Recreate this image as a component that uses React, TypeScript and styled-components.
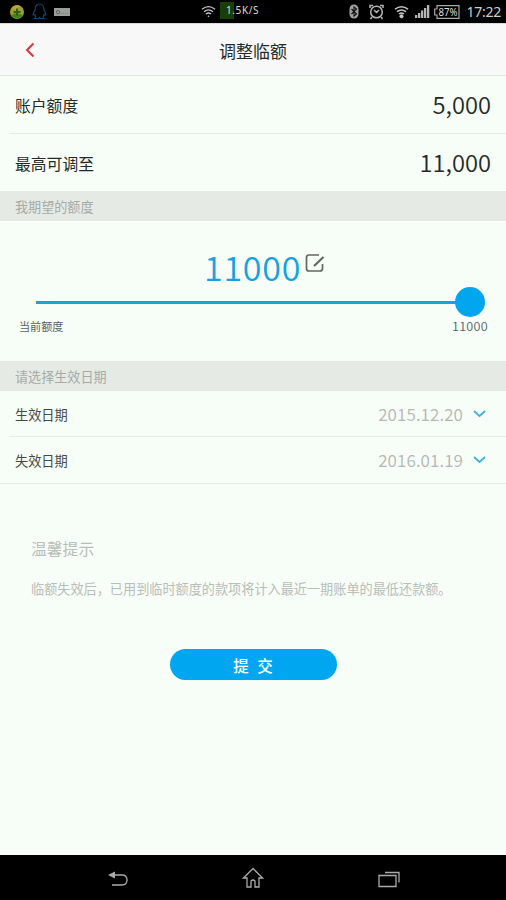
import React from "react";
import styled, { createGlobalStyle } from "styled-components";

const GlobalStyle = createGlobalStyle`
  * { box-sizing: border-box; }
  body { margin: 0; background: #f7fdf7; }
`;

const Screen = styled.div`
  width: 506px;
  height: 900px;
  display: flex;
  flex-direction: column;
  overflow: hidden;
  background: #f7fdf7;
  color: #252a27;
  font-family: "Noto Sans CJK SC", "Noto Sans", sans-serif;
  white-space: nowrap;
`;

const StatusBar = styled.div`
  height: 23px;
  flex: none;
  background: #000;
  color: #c4c4c4;
  display: grid;
  grid-template-columns: 200px 1fr auto;
  align-items: center;
  padding-right: 5px;
`;

const StatusGroup = styled.div<{ $gap: number; $left?: number }>`
  display: flex;
  align-items: center;
  height: 23px;
  gap: ${(p) => p.$gap}px;
  padding-left: ${(p) => p.$left ?? 0}px;
`;

const Speed = styled.span`
  height: 17px;
  width: 42px;
  margin: 0 0 3px -1px;
  padding-left: 6px;
  background: linear-gradient(90deg, #174008 14px, transparent 14px);
  font: 10px/17px "Noto Sans", sans-serif;
  letter-spacing: 0.6px;
  color: #dedede;
`;

const SignalGroup = styled(StatusGroup)`
  svg:nth-child(2) { margin-left: 4px; }
  svg:nth-child(3) { margin-left: 4px; }
  svg:nth-child(4) { margin-right: -2px; }
`;

const Clock = styled.span`
  font: 14px/22px "Noto Sans", sans-serif;
  letter-spacing: -0.25px;
  color: #cfcfcf;
`;

const Header = styled.header`
  height: 53px;
  flex: none;
  display: grid;
  grid-template-columns: 60px 1fr 60px;
  align-items: center;
  background: #f8f8f8;
  border-top: 1px solid #d9d9d9;
  border-bottom: 1px solid #e1e8e1;
`;

const Title = styled.h1`
  margin: 0;
  padding-top: 3px;
  text-align: center;
  font-size: 17px;
  line-height: 24px;
  font-weight: 400;
`;

const BackButton = styled.button`
  border: 0;
  padding: 0 0 0 25px;
  background: none;
  display: flex;
`;

const Row = styled.div<{ $height: number; $inset?: boolean; $line?: boolean }>`
  height: ${(p) => p.$height}px;
  flex: none;
  display: flex;
  align-items: center;
  justify-content: space-between;
  margin-left: ${(p) => (p.$inset ? 9 : 0)}px;
  padding: 2px 15px 0 ${(p) => (p.$inset ? 6 : 15)}px;
  border-bottom: ${(p) => (p.$line ? 1 : 0)}px solid #e6ebe6;
`;

const RowLabel = styled.span<{ $small?: boolean }>`
  font-size: ${(p) => (p.$small ? 13.2 : 15.8)}px;
  line-height: 24px;
  color: ${(p) => (p.$small ? "#454a47" : "#252a27")};
`;

const Amount = styled.span`
  font-size: 23.7px;
  line-height: 30px;
  padding-bottom: 4px;
  font-weight: 350;
`;

const DateValue = styled.span`
  display: flex;
  align-items: center;
  gap: 10px;
  padding-right: 5px;
  font-size: 17px;
  line-height: 24px;
  padding-bottom: 2px;
  font-weight: 350;
  letter-spacing: 0.1px;
  color: #b3b8b4;
`;

const SectionTitle = styled.div`
  height: 30px;
  flex: none;
  padding: 1px 15px 0;
  background: #e5eae5;
  color: #a5aaa6;
  font-size: 13.1px;
  line-height: 29px;
`;

const LimitPanel = styled.section`
  height: 140px;
  flex: none;
  padding-top: 24px;
`;

const LimitValue = styled.div`
  height: 42px;
  display: flex;
  padding-left: 204px;
  gap: 4px;
  color: #15a2e2;
  font-size: 34px;
  line-height: 43px;
  font-weight: 350;
  letter-spacing: 0.75px;
  svg { margin-top: 8px; }
`;

const Slider = styled.div`
  height: 30px;
  display: flex;
  align-items: center;
  padding-left: 36px;
`;

const Track = styled.div`
  width: 420px;
  height: 3px;
  background: #18a3dc;
`;

const Thumb = styled.div`
  width: 30px;
  height: 30px;
  margin-left: -1px;
  border-radius: 50%;
  background: #02a6ef;
`;

const SliderLabels = styled.div`
  display: flex;
  justify-content: space-between;
  padding: 0 18px 0 19px;
  font-size: 11.1px;
  line-height: 18px;
  color: #566168;
`;

const MaxLabel = styled.span`
  font-size: 12.6px;
  line-height: 17px;
  font-weight: 350;
  letter-spacing: 0.3px;
`;

const Notice = styled.section`
  height: 165px;
  flex: none;
  padding: 53px 31px 0;
  color: #b8beb9;
`;

const NoticeTitle = styled.h2`
  margin: 0 0 16px;
  font-size: 15.8px;
  line-height: 24px;
  font-weight: 400;
`;

const NoticeText = styled.p`
  margin: 0;
  font-size: 13.15px;
  line-height: 24px;
`;

const SubmitButton = styled.button`
  width: 167px;
  height: 31px;
  flex: none;
  align-self: center;
  border: 0;
  border-radius: 16px;
  padding: 0;
  background: #00a7f0;
  color: #fff;
  font: 500 15.5px/28px "Noto Sans CJK SC", sans-serif;
  word-spacing: 5px;
`;

const NavBar = styled.nav`
  height: 45px;
  flex: none;
  margin-top: auto;
  display: grid;
  grid-template-columns: 1fr 36px 1fr;
  align-items: center;
  padding: 0 106px;
  background: #000;
  svg:nth-child(1) { margin-top: 3px; }
  svg:nth-child(2) { justify-self: center; }
  svg:nth-child(3) { justify-self: end; margin-top: 3px; }
`;

const Chevron = () => (
  <svg width="13" height="8" viewBox="0 0 13 8" fill="none" stroke="#3db1df" strokeWidth="1.7">
    <path d="M1 1l5.500 5L12 1" />
  </svg>
);

const RewardIcon = () => (
  <svg width="16" height="16" viewBox="0 0 16 16">
    <circle cx="8" cy="8" r="7" fill="#98a02a" />
    <path d="M2 11a7 7 0 0 0 12 0l-6-2z" fill="#438125" />
    <path d="M3 4a7 7 0 0 1 8-2L7 6z" fill="#c7a535" />
    <path d="M8 4.500v7M4.500 8h7" stroke="#365d17" strokeWidth="2" />
  </svg>
);

const PenguinIcon = () => (
  <svg width="15" height="17" viewBox="0 0 15 17" fill="none" stroke="#104675" strokeWidth="1.2">
    <path d="M3 7C3 3 5 1 7.500 1S12 3 12 7c1 2 2 3 1.800 5l-1.600-.5-1 2.500 1 1.500H8.500l-1-1-1 1H2.800l1-1.500-1-2.500-1.600.5C1 10 2 9 3 7z" />
  </svg>
);

const KeyboardIcon = () => (
  <svg width="16" height="8" viewBox="0 0 16 8">
    <path fill="#9b9e9b" d="M0 0h16v8H0z" />
    <circle cx="4" cy="4.200" r="1.700" fill="none" stroke="#5e625e" />
    <path d="M7 5.500h7" stroke="#7d817d" strokeDasharray="1 1" />
  </svg>
);

const WifiIcon = ({ strong }: { strong?: boolean }) => (
  <svg width="15" height="15" viewBox="0 0 15 15" fill="none" stroke="#c4c4c4" strokeWidth={strong ? 1.6 : 1.3}>
    <path d="M1 5.200q6.500-5 13 0M3 7.700q4.500-3.500 9 0M5 10q2.500-2 5 0" />
    <circle cx="7.500" cy="12.200" r={strong ? 2 : 0.8} fill="#c4c4c4" stroke="none" />
  </svg>
);

const BluetoothIcon = () => (
  <svg width="10" height="15" viewBox="0 0 10 15">
    <rect x=".5" y=".5" width="9" height="14" rx="4.500" fill="#a2a2a2" />
    <path d="M2.500 5l5 5L5 12V3l2.500 2-5 5" fill="none" stroke="#111" strokeWidth="1.100" />
  </svg>
);

const AlarmIcon = () => (
  <svg width="15" height="16" viewBox="0 0 15 16" fill="none" stroke="#b4b4b4" strokeWidth="1.500">
    <circle cx="7.500" cy="8" r="5.800" />
    <path d="M1 4V1.500h3M11 1.500h3V4M3 13l-1.500 2M12 13l1.500 2M5 6l2.500 2.500L10 6" />
  </svg>
);

const SignalIcon = () => (
  <svg width="15" height="13" viewBox="0 0 15 13" fill="#b6b6b6">
    <path d="M0 10h2.300v3H0zM3 8h2.300v5H3zM6 5.500h2.300V13H6zM9 3h2.300v10H9zM12 0h2.300v13H12z" />
  </svg>
);

const BatteryIcon = () => (
  <svg width="26" height="14" viewBox="0 0 26 14">
    <path d="M3 .7h22v12.600H3V10H.7V4H3z" fill="none" stroke="#a8a8a8" strokeWidth="1.200" />
    <text x="4.500" y="10.500" fill="#dedede" fontFamily="Noto Sans" fontSize="10" textLength="19" lengthAdjust="spacingAndGlyphs">87%</text>
  </svg>
);

const rates = [
  { label: "账户额度", value: "5,000", height: 58, inset: true },
  { label: "最高可调至", value: "11,000", height: 57, inset: false },
];

const dates = [
  { label: "生效日期", value: "2015.12.20", height: 46, inset: true },
  { label: "失效日期", value: "2016.01.19", height: 47, inset: false },
];

export default function App() {
  return (
    <Screen>
      <GlobalStyle />
      <StatusBar>
        <StatusGroup $gap={7} $left={9}>
          <RewardIcon />
          <PenguinIcon />
          <KeyboardIcon />
        </StatusGroup>
        <StatusGroup $gap={5} $left={1}>
          <WifiIcon />
          <Speed>1.5K/S</Speed>
        </StatusGroup>
        <SignalGroup $gap={6}>
          <BluetoothIcon />
          <AlarmIcon />
          <WifiIcon strong />
          <SignalIcon />
          <BatteryIcon />
          <Clock>17:22</Clock>
        </SignalGroup>
      </StatusBar>
      <Header>
        <BackButton aria-label="返回">
          <svg width="10" height="16" viewBox="0 0 10 16" fill="none" stroke="#d83a3a" strokeWidth="2">
            <path d="M8.500 1.500L2 8l6.500 6.500" />
          </svg>
        </BackButton>
        <Title>调整临额</Title>
      </Header>
      {rates.map((r) => (
        <Row key={r.label} $height={r.height} $inset={r.inset} $line={r.inset}>
          <RowLabel>{r.label}</RowLabel>
          <Amount>{r.value}</Amount>
        </Row>
      ))}
      <SectionTitle>我期望的额度</SectionTitle>
      <LimitPanel>
        <LimitValue>
          11000
          <svg width="20" height="20" viewBox="0 0 20 20" fill="none" stroke="#626762" strokeWidth="1.700">
            <path d="M14 2H4Q1.500 2 1.500 4.500v11Q1.500 18 4 18h11q2.500 0 2.500-2.500V11" />
            <path d="M9 13L18.500 4" strokeWidth="2.200" />
          </svg>
        </LimitValue>
        <Slider>
          <Track />
          <Thumb />
        </Slider>
        <SliderLabels>
          <span>当前额度</span>
          <MaxLabel>11000</MaxLabel>
        </SliderLabels>
      </LimitPanel>
      <SectionTitle>请选择生效日期</SectionTitle>
      {dates.map((d) => (
        <Row key={d.label} $height={d.height} $inset={d.inset} $line>
          <RowLabel $small>{d.label}</RowLabel>
          <DateValue>
            {d.value}
            <Chevron />
          </DateValue>
        </Row>
      ))}
      <Notice>
        <NoticeTitle>温馨提示</NoticeTitle>
        <NoticeText>临额失效后，已用到临时额度的款项将计入最近一期账单的最低还款额。</NoticeText>
      </Notice>
      <SubmitButton>提 交</SubmitButton>
      <NavBar>
        <svg width="24" height="20" viewBox="0 0 24 20" fill="none" stroke="#aaa" strokeWidth="1.300">
          <path d="M7 6h9q5 0 5 5t-5 5H6" />
          <path d="M2 6l7-3.500v7z" fill="#aaa" stroke="none" />
        </svg>
        <svg width="22" height="22" viewBox="0 0 22 22" fill="none" stroke="#aaa" strokeWidth="1.300">
          <path d="M11 1.500L1.500 11H5v9h4v-6q2-2 4 0v6h4v-9h3.500z" />
        </svg>
        <svg width="22" height="18" viewBox="0 0 22 18" fill="none" stroke="#aaa" strokeWidth="1.300">
          <path d="M1 5.500h17v11H1zM7 2.500h14v10" />
        </svg>
      </NavBar>
    </Screen>
  );
}
